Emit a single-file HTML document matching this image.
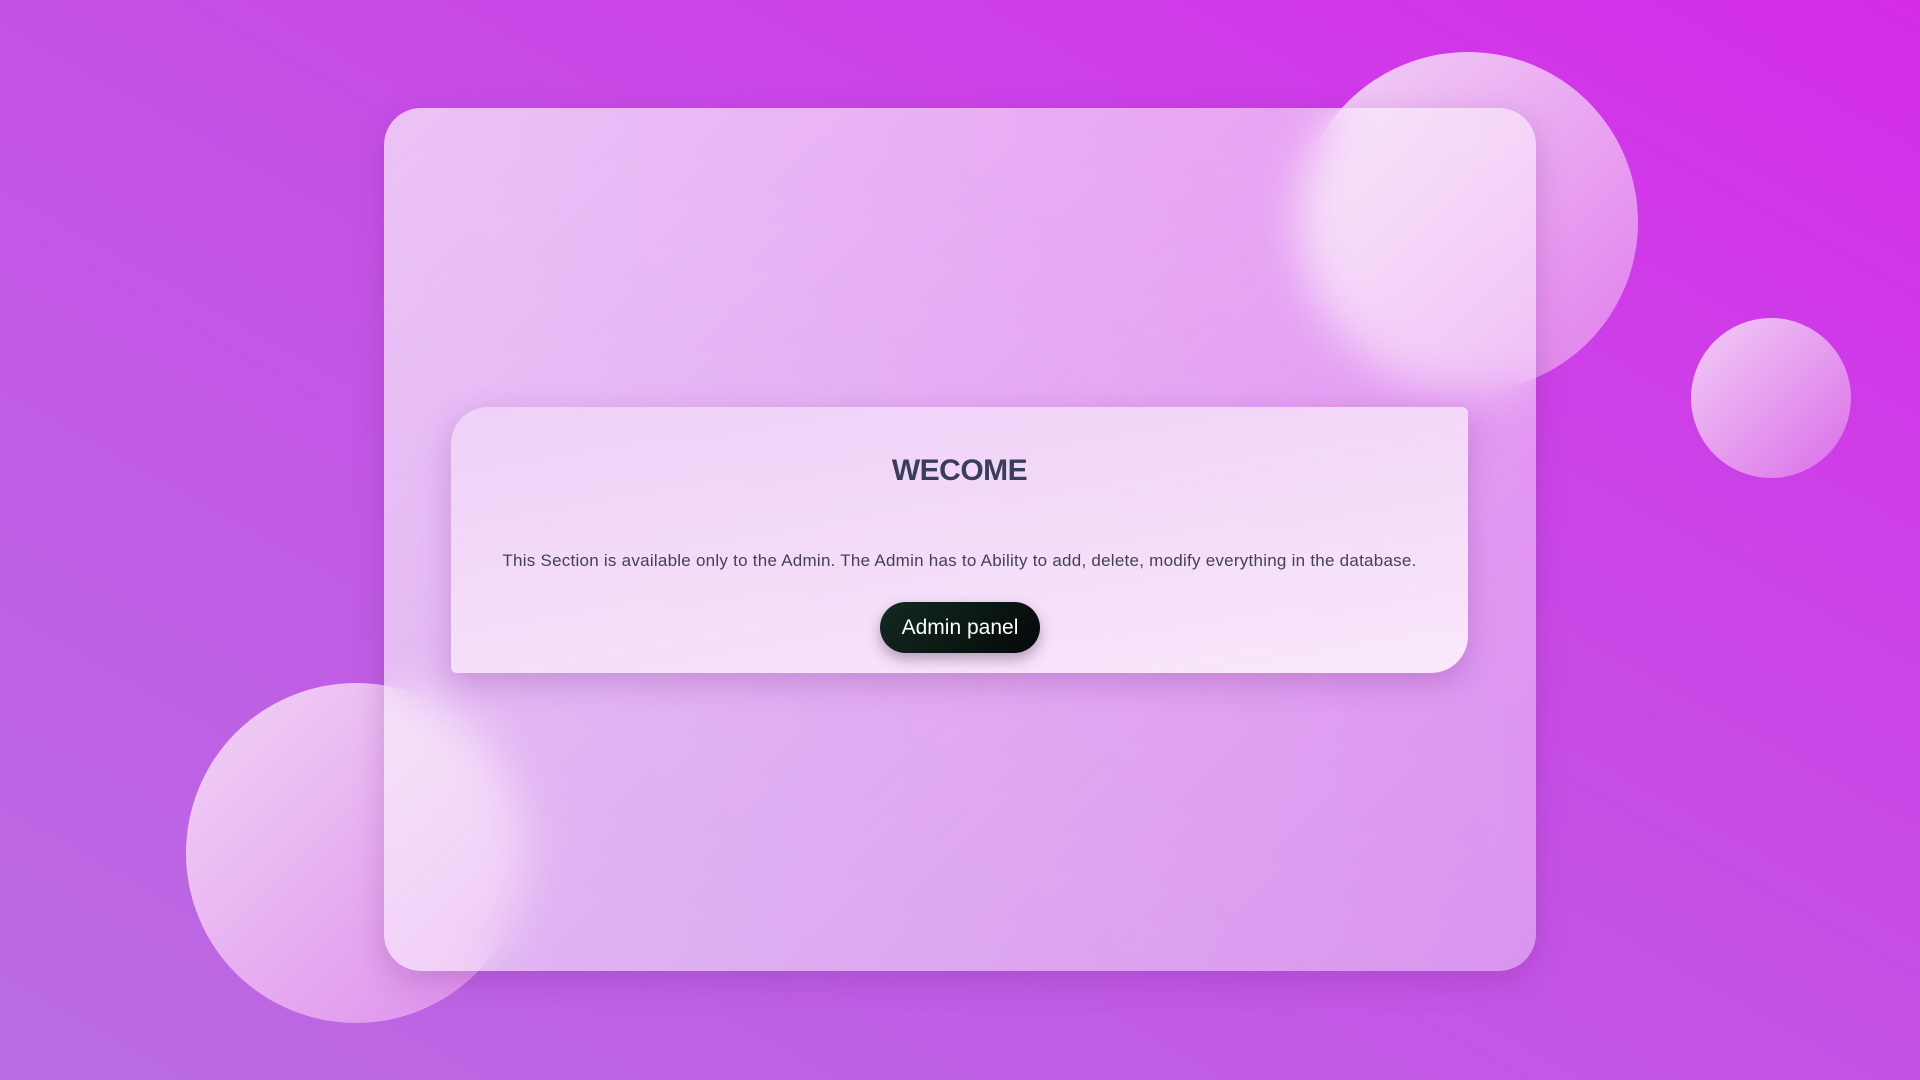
<!DOCTYPE html>
<html><head><meta charset="utf-8"><style>
html,body{margin:0;padding:0;width:1920px;height:1080px;overflow:hidden}
body{background:linear-gradient(to top right,#b96ce3 0%,#c552e6 50%,#d52ce9 100%);position:relative;font-family:"Liberation Sans",sans-serif}
.c{position:absolute;border-radius:50%}
.c1{left:1298px;top:52px;width:340px;height:340px;background:linear-gradient(135deg,#f3d2f6,#e07ded)}
.c2{left:1691px;top:318px;width:160px;height:160px;background:linear-gradient(135deg,#f2cdf5,#da6ee9)}
.c3{left:186px;top:683px;width:340px;height:340px;background:linear-gradient(135deg,#f2d3f5,#dc8cec)}
.card{position:absolute;left:384px;top:108px;width:1152px;height:863px;border-radius:37px;background:linear-gradient(135deg,rgba(255,255,255,0.66),rgba(255,255,255,0.38));backdrop-filter:blur(22px);-webkit-backdrop-filter:blur(22px);box-shadow:0 10px 30px rgba(120,30,140,0.25)}
.inner{position:absolute;left:451px;top:407px;width:1017px;height:266px;border-radius:37px 6px 37px 6px;background:linear-gradient(170deg,rgba(240,210,248,0.9),rgba(250,236,250,0.95));box-shadow:0 10px 30px rgba(110,30,130,0.25);text-align:center;color:#3a3a55}
h1{margin:0;position:absolute;top:47px;left:0;right:0;font-size:30px;font-weight:bold;color:#3b3e5a;letter-spacing:-0.5px}
p{margin:0;position:absolute;top:144px;left:0;right:0;font-size:17px;letter-spacing:0.25px;color:#444058}
.btn{position:absolute;left:429px;top:195px;width:160px;height:51px;border-radius:26px;background:linear-gradient(135deg,#122a22,#050808);color:#fff;font-size:21px;line-height:51px;box-shadow:0 6px 14px rgba(60,20,70,0.35)}
</style></head><body>
<div class="c c1"></div><div class="c c2"></div><div class="c c3"></div>
<div class="card"></div>
<div class="inner">
<h1>WECOME</h1>
<p>This Section is available only to the Admin. The Admin has to Ability to add, delete, modify everything in the database.</p>
<div class="btn">Admin panel</div>
</div>
</body></html>
